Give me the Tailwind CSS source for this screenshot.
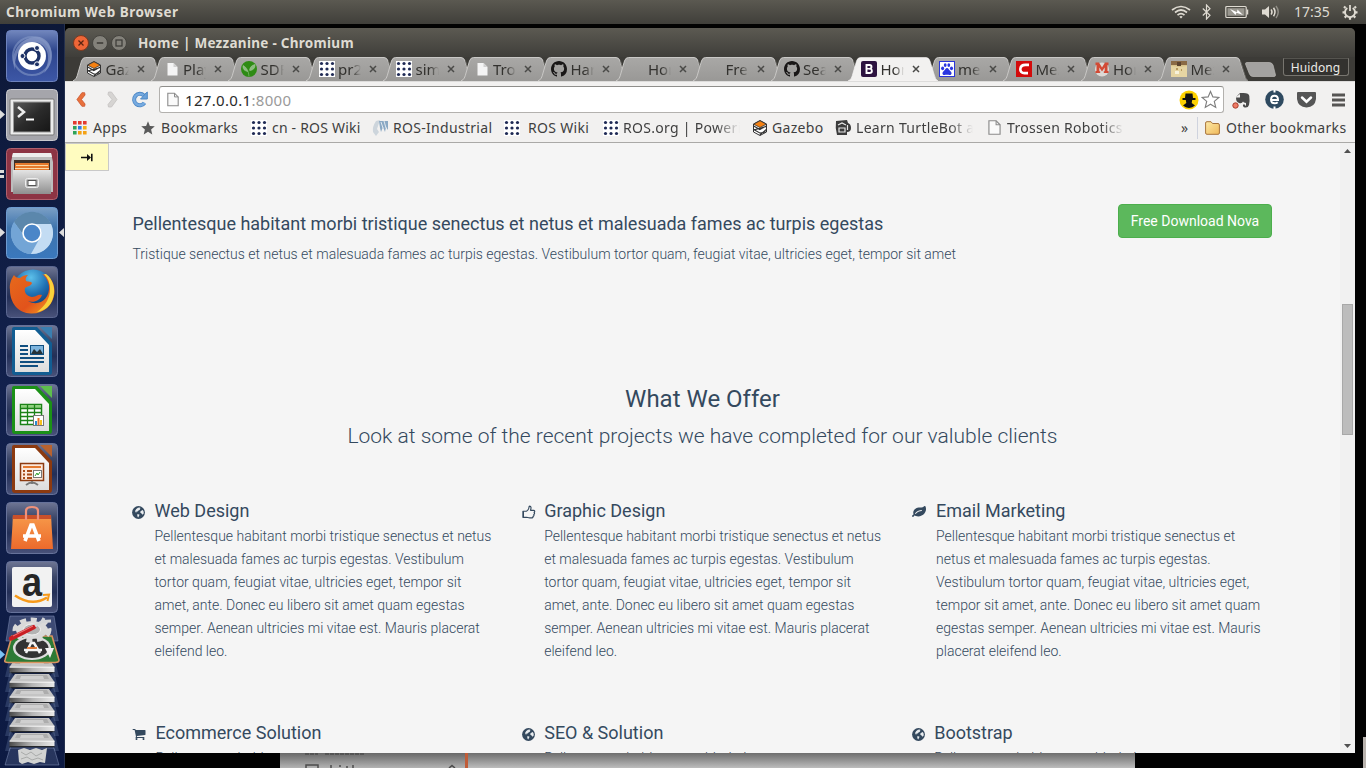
<!DOCTYPE html>
<html lang="en">
<head>
<meta charset="utf-8">
<title>Home | Mezzanine</title>
<script src="https://cdn.jsdelivr.net/npm/@tailwindcss/browser@4"></script>
</head>
<body class="h-[768px] w-[1366px] overflow-hidden bg-[#020202]">

<svg width="0" height="0" class="absolute">
  <defs>
    <linearGradient id="tabg" x1="0" y1="0" x2="0" y2="1"><stop offset="0" stop-color="#a9a8a6"/><stop offset="1" stop-color="#999896"/></linearGradient>
    <linearGradient id="org" x1="0" y1="0" x2="0" y2="1"><stop offset="0" stop-color="#f79a4a"/><stop offset="1" stop-color="#ec6a2c"/></linearGradient>
    <linearGradient id="silver" x1="0" y1="0" x2="0" y2="1"><stop offset="0" stop-color="#e4e4e4"/><stop offset="1" stop-color="#8f8f8f"/></linearGradient>
    <linearGradient id="face" x1="0" y1="0" x2="1" y2="0"><stop offset="0" stop-color="#4a4a4a"/><stop offset=".5" stop-color="#b5b5b5"/><stop offset="1" stop-color="#e8e8e8"/></linearGradient>
    <linearGradient id="tile" x1="0" y1="0" x2="0" y2="1"><stop offset="0" stop-color="#6f7694"/><stop offset=".3" stop-color="#3c4769"/><stop offset=".6" stop-color="#232f57"/><stop offset="1" stop-color="#49527a"/></linearGradient>
    <linearGradient id="blue" x1="0" y1="0" x2="0" y2="1"><stop offset="0" stop-color="#7287bd"/><stop offset=".4" stop-color="#2d458c"/><stop offset="1" stop-color="#3d57a6"/></linearGradient>
    <linearGradient id="sky" x1="0" y1="0" x2="0" y2="1"><stop offset="0" stop-color="#7ba0c6"/><stop offset=".4" stop-color="#3f74ad"/><stop offset="1" stop-color="#3a78bd"/></linearGradient>
    <linearGradient id="paper" x1="0" y1="0" x2="0" y2="1"><stop offset="0" stop-color="#ffffff"/><stop offset="1" stop-color="#dddddd"/></linearGradient>
    <linearGradient id="screen" x1="0" y1="0" x2="1" y2="1"><stop offset="0" stop-color="#5a5a5a"/><stop offset=".5" stop-color="#2b2b2b"/><stop offset="1" stop-color="#161616"/></linearGradient>
    <linearGradient id="ffox" x1="0" y1="0" x2="1" y2="1"><stop offset="0" stop-color="#e66a1c"/><stop offset=".6" stop-color="#e2531b"/><stop offset="1" stop-color="#f7a823"/></linearGradient>
    <radialGradient id="earth" cx=".45" cy=".2" r=".8"><stop offset="0" stop-color="#5cc0ea"/><stop offset=".5" stop-color="#1f6fb2"/><stop offset="1" stop-color="#0b2f66"/></radialGradient>
    <linearGradient id="fold" x1="0" y1="0" x2="1" y2="1"><stop offset="0" stop-color="#fdeaa8"/><stop offset="1" stop-color="#f0b95a"/></linearGradient>
  </defs>
  <symbol id="tab" viewBox="0 0 90 24"><path d="M0 24C3 23 4 20 5 16L8.500 4Q9.500 .5 12.500 .5H78Q81 .5 82 4L86 17Q87.500 23 90 24Z" fill="url(#tabg)"/><path d="M0 23.800C3 23 4 20 5 16L8.500 4Q9.500 .5 12.500 .5H78Q81 .5 82 4L86 17Q87.500 23 90 23.800" fill="none" stroke="#c9c8c6" stroke-width="1"/><path d="M82.500 4L86.500 17Q88 23 90 23.800" fill="none" stroke="#686763" stroke-width="1"/></symbol>
  <symbol id="tabon" viewBox="0 0 90 24"><path d="M0 24C3 23 4 20 5 16L8.500 4Q9.500 .5 12.500 .5H78Q81 .5 82 4L86 17Q87.500 23 90 24Z" fill="#f2f1f0" stroke="#f8f7f6" stroke-width=".6"/></symbol>
  <symbol id="x" viewBox="0 0 8 8"><path d="M1 1L7 7M7 1L1 7" stroke="#4a4a48" stroke-width="1.500"/></symbol>
  <symbol id="gazebo" viewBox="0 0 16 16"><path d="M8 0.500L14.500 4V12L8 15.500L1.500 12V4Z" fill="#fff" stroke="#333" stroke-width="1"/><path d="M8 .8L14.300 4.200L8 7.500L1.700 4.200Z" fill="#f58113" stroke="#333" stroke-width=".8"/><path d="M1.700 6L7.800 9.500L14.300 6M1.700 10L14.300 6.500M7.800 15L14.300 9.500M1.700 9.500L7.800 13L14 12" stroke="#333" stroke-width="1.100" fill="none"/></symbol>
  <symbol id="page" viewBox="0 0 16 16"><path d="M3.500 2H9.500L13.500 6V14.500H3.500Z" fill="#f4f4f4"/><path d="M9.500 2V6H13.500Z" fill="#d0d0d0"/></symbol>
  <symbol id="pageo" viewBox="0 0 12 14"><path d="M.8 .7H7.500L11.200 4.400V13.300H.8Z" fill="#fafafa" stroke="#8b8b8b" stroke-width="1.100"/><path d="M7.500 .7V4.400H11.200" fill="none" stroke="#8b8b8b"/></symbol>
  <symbol id="sdf" viewBox="0 0 16 16"><circle cx="8" cy="8" r="8" fill="#2e8b14"/><path d="M8 15.500C7.500 10 6 6.500 2 4.500C1.500 8 3.500 10 7 10.500M8.500 9C9 6 11 4 14 3.500C14.500 7 12 9.500 8.500 9.500" fill="#8dba80" stroke="#a9cf9e" stroke-width=".5"/></symbol>
  <symbol id="dots" viewBox="0 0 16 16"><rect width="16" height="16" fill="#fff"/><g fill="#1f2a55"><circle cx="2.500" cy="2.500" r="1.600"/><circle cx="8" cy="2.500" r="1.600"/><circle cx="13.500" cy="2.500" r="1.600"/><circle cx="2.500" cy="8" r="1.600"/><circle cx="8" cy="8" r="1.600"/><circle cx="13.500" cy="8" r="1.600"/><circle cx="2.500" cy="13.500" r="1.600"/><circle cx="8" cy="13.500" r="1.600"/><circle cx="13.500" cy="13.500" r="1.600"/></g></symbol>
  <symbol id="gh" viewBox="0 0 16 16"><path fill="#191717" d="M8 0C3.580 0 0 3.580 0 8c0 3.540 2.290 6.530 5.470 7.590.4.07.55-.17.55-.38 0-.19-.01-.82-.01-1.490-2.010.37-2.530-.49-2.690-.94-.09-.23-.48-.94-.82-1.130-.28-.15-.68-.52-.01-.53.63-.01 1.080.58 1.230.82.72 1.210 1.870.87 2.330.66.07-.52.28-.87.51-1.070-1.780-.2-3.640-.89-3.640-3.950 0-.87.31-1.590.82-2.150-.08-.2-.36-1.020.08-2.120 0 0 .67-.21 2.200.82.64-.18 1.320-.27 2-.27.68 0 1.360.09 2 .27 1.530-1.040 2.200-.82 2.200-.82.44 1.100.16 1.920.08 2.120.51.56.82 1.270.82 2.150 0 3.070-1.870 3.750-3.650 3.950.29.25.54.73.54 1.480 0 1.070-.01 1.930-.01 2.200 0 .21.15.46.55.38A8.013 8.013 0 0 0 16 8c0-4.420-3.580-8-8-8z"/></symbol>
  <symbol id="boot" viewBox="0 0 16 16"><rect width="16" height="16" rx="2" fill="#2d1340"/><path d="M5.500 4H8.500Q10.500 4 10.500 5.900Q10.500 7.200 9.300 7.700Q10.900 8.200 10.900 9.900Q10.900 12 8.500 12H5.500Z" fill="none" stroke="#fff" stroke-width="1.900"/><path d="M5.500 7.800H9" stroke="#fff" stroke-width="1.600"/></symbol>
  <symbol id="paw" viewBox="0 0 16 16"><rect x=".5" y=".5" width="15" height="15" fill="#fff" stroke="#2a36d8"/><g fill="#2a36e0"><ellipse cx="3.600" cy="7.300" rx="1.500" ry="1.900"/><ellipse cx="6.200" cy="4.100" rx="1.400" ry="1.900"/><ellipse cx="9.800" cy="4.100" rx="1.400" ry="1.900"/><ellipse cx="12.500" cy="7.300" rx="1.500" ry="1.900"/><path d="M8 7C9.500 7 10 9 11.500 10.200C13.500 12 12.500 14.200 10.500 14C9 13.700 7 13.700 5.500 14C3.500 14.200 2.700 12 4.500 10.200C6 9 6.500 7 8 7"/></g></symbol>
  <symbol id="cc" viewBox="0 0 16 16"><rect width="16" height="16" fill="#d30b0b"/><path d="M13 3.900H9.500C3 3.900 2.500 12.100 8.500 12.100H12" fill="none" stroke="#fff" stroke-width="2.600"/></symbol>
  <symbol id="mm" viewBox="0 0 16 16"><circle cx="8" cy="8.500" r="7" fill="#dcd9d5"/><path d="M1.500 1.500H5L8 6.500L11 1.500H14.500V4H13.500V10H14.500V12H9.800V10.300H10.700V6.500L8 10.500L5.300 6.500V10.300H6.200V12H1.500V10H2.500V4H1.500Z" fill="#d24a35"/></symbol>
  <symbol id="photo" viewBox="0 0 16 16"><rect width="16" height="16" fill="#d9c48c"/><rect width="16" height="4" fill="#8a6a45"/><rect x="6" y="1" width="4" height="4" fill="#5c4430"/><path d="M0 5L9 6L16 5V16H0Z" fill="#e6d5a3"/><path d="M4 10H8V13H4Z" fill="#f7f2dc"/><path d="M5 7H7V9H5ZM10 8H11V10H10Z" fill="#b79a5f"/></symbol>
  <symbol id="none" viewBox="0 0 16 16"></symbol>
  <symbol id="globe" viewBox="0 0 14 14"><circle cx="7" cy="7" r="6.900" fill="#34495e"/><path d="M6.400 1.800L8 1.500L9.300 2.200L8.200 3.200L8.800 4L7 4.900L6.100 6L4.900 5.800L4.700 7L3.700 6.600L3.400 5L4.600 3.200ZM10 5L11.600 4.200L12.600 6.200V8L11.300 9.500L10.300 8L9 7.400L9 5.900ZM6 8.600L8.200 9.500L7.500 10.800L6.700 12.300L6 11.600L5.600 9.800Z" fill="#e9ecef"/></symbol>
  <symbol id="thumb" viewBox="0 0 14 14"><path d="M4.500 6.200C6 5.400 7 3.500 7.200 1.200C9.300 .8 9.300 3 8.500 5.300H11.500C13 5.300 13 7 12.100 7.300C12.900 8 12.500 9.200 11.800 9.400C12.200 10.300 11.700 11.200 11 11.300C11.200 12.500 10.500 12.900 9.500 12.900H7.700C6.500 12.900 5.500 12.300 4.500 12.200M4.500 6.200H.9V12.300H4.500" fill="none" stroke="#34495e" stroke-width="1.150" stroke-linejoin="round"/><path d="M1 6.300H2V12H1Z" fill="#34495e"/></symbol>
  <symbol id="leaf" viewBox="0 0 1792 1792"><path fill="#34495e" d="M1280 704q0-26-19-45t-45-19q-172 0-318 49.500t-259.500 134-235.500 219.500q-19 21-19 45 0 26 19 45t45 19q24 0 45-19 27-24 74-71t67-66q137-124 268.500-176t313.500-52q26 0 45-19t19-45zm512-198q0 95-20 193-46 224-184.500 383t-357.500 268q-214 108-438 108-148 0-286-47-15-5-88-42t-96-37q-16 0-39.500 32t-45 70-52.500 70-60 32q-43 0-63.500-17.500t-45.500-59.500q-2-4-6-11t-5.500-10-3-9.500-1.500-13.500q0-35 31-73.500t68-65.500 68-56 31-48q0-4-14-38t-16-44q-9-51-9-104 0-115 43.500-220t119-184.500 170.500-139 204-95.500q55-18 145-25.500t179.500-9 178.500-6 163.500-24 113.500-56.500l29.500-29.500 29.500-28 27-20 36.500-16 43.500-4.500q39 0 70.500 46t47.500 112 24 124 8 96z"/></symbol>
  <symbol id="cart" viewBox="0 0 1792 1792"><path fill="#34495e" d="M704 1536q0 52-38 90t-90 38-90-38-38-90 38-90 90-38 90 38 38 90zm896 0q0 52-38 90t-90 38-90-38-38-90 38-90 90-38 90 38 38 90zm128-1088v512q0 24-16.500 42.500t-40.500 21.500l-1044 122q13 60 13 70 0 16-24 64h920q26 0 45 19t19 45-19 45-45 19h-1024q-26 0-45-19t-19-45q0-11 8-31.500t16-36 21.500-40 15.500-29.500l-177-823h-204q-26 0-45-19t-19-45 19-45 45-19h256q16 0 28.500 6.500t19.500 15.500 13 24.500 8 26 5.500 29.500 4.500 26h1201q26 0 45 19t19 45z"/></symbol>
  <symbol id="disk" viewBox="0 0 56 24"><path d="M6 1L1 22H6L10 6ZM50 1L55 22H50L46 6Z" fill="#8fa3cf" fill-opacity=".22"/><path d="M11 4H45L50.500 12H5.500Z" fill="#c4c4c4"/><path d="M13 5H43L45 9H11Z" fill="#adadad"/><path d="M17 6H39L40 9H16Z" fill="#cfcfcf"/><path d="M5.500 12H50.500V17H5.500Z" fill="url(#face)"/><path d="M5.500 17.700H50.500" stroke="#26282c" stroke-width="1.300"/><path d="M5.500 12.200H50.500" stroke="#f8f8f8"/></symbol>
</svg>

<div class="flex h-[768px] w-[1366px] flex-col overflow-hidden">
  <!-- Desktop panel -->
  <header class="flex h-6 shrink-0 items-center bg-linear-to-b from-[#5b5951] to-[#403f3a] pr-[8px] pl-1.5 font-['Noto_Sans',sans-serif] text-[#dfdbd2]">
    <div class="text-[13.500px] font-bold tracking-[.5px] whitespace-nowrap">Chromium Web Browser</div>
    <div class="ml-auto flex items-center">
      <svg class="mr-[11px] h-4 w-[20px]" viewBox="0 0 20 16" fill="none" stroke="#dfdbd2" stroke-width="1.700"><path d="M1 6Q10-1 19 6" /><path d="M4 8.500Q10 3.500 16 8.500"/><path d="M6.500 11.200Q10 8 13.500 11.200"/><path d="M8.300 12.800L10 14.500L11.700 12.800Q10 11.300 8.300 12.800Z" fill="#dfdbd2" stroke="none"/></svg>
      <svg class="mr-[14px] h-4 w-[9px]" viewBox="0 0 9 16" fill="none" stroke="#dfdbd2" stroke-width="1.200"><path d="M.8 4.500L8 11.300L4.500 15V1L8 4.700L.8 11.500"/></svg>
      <svg class="mr-[12px] h-4 w-[24px]" viewBox="0 0 24 16"><rect x=".8" y="2.500" width="20.400" height="11" rx="1" fill="none" stroke="#dfdbd2" stroke-width="1.200"/><rect x="2.500" y="4.200" width="17" height="7.600" fill="#99978f"/><path d="M22.500 5.500V10.500" stroke="#dfdbd2" stroke-width="1.500"/><path d="M5 5L12 8.200L12.500 5.500L18 11L11.500 8.800L10.500 11Z" fill="#fff"/></svg>
      <svg class="mr-[13px] h-4 w-[20px]" viewBox="0 0 20 16"><path d="M1 5.500H4L8 2V14L4 10.500H1Z" fill="#dfdbd2"/><path d="M10 5.500Q12 8 10 10.500M12.500 3.800Q15.500 8 12.500 12.200" fill="none" stroke="#dfdbd2" stroke-width="1.500"/><path d="M15 2Q19.500 8 15 14" fill="none" stroke="#908e86" stroke-width="1.400"/></svg>
      <div class="w-[37px] text-[14px] leading-6 whitespace-nowrap">17:35</div>
      <svg class="ml-[11px] h-4 w-4" viewBox="0 0 16 16" fill="none" stroke="#dfdbd2"><path d="M5.300 4A5 5 0 1 0 10.700 4" stroke-width="1.900"/><path d="M8 1V7" stroke-width="1.800"/><path d="M3.500 4L2 2.500M12.500 4L14 2.500M3 8.300H.5M13 8.300H15.500M4.300 12L2.700 13.600M11.700 12L13.300 13.600M8 13.300V15.700" stroke-width="2.200"/></svg>
    </div>
  </header>

  <div class="flex h-[744px]">
    <!-- Launcher -->
    <nav class="relative flex w-[65px] shrink-0 flex-col items-center gap-[7px] border-r border-[#24304e] bg-linear-to-b from-[#0d1838] via-[#12214d] to-[#0d1a42] pt-1.5">
      <svg class="h-[52px] w-[52px] shrink-0" viewBox="0 0 52 52"><rect x=".5" y=".5" width="51" height="51" rx="4" fill="url(#blue)" stroke="#6d82bd"/><path d="M9 40C2 20 18 5 34 7C50 12 48 35 38 43C48 24 38 12 28 12C16 12 8 24 9 40Z" fill="#a5b4d9" fill-opacity=".5"/><circle cx="26" cy="26" r="19" fill="none" stroke="#8497c6" stroke-opacity=".6" stroke-width="2"/><circle cx="26" cy="26" r="14" fill="#fff"/><circle cx="26" cy="26" r="7" fill="none" stroke="#1e3266" stroke-width="3.400"/><g fill="#1e3266" stroke="#fff"><circle cx="16.500" cy="26" r="2.500"/><circle cx="31" cy="18" r="2.500"/><circle cx="31" cy="34.300" r="2.500"/></g></svg>
      <svg class="h-[52px] w-[52px] shrink-0" viewBox="0 0 52 52"><rect x=".5" y=".5" width="51" height="51" rx="4" fill="#a5a5ab" stroke="#c9c9ce"/><rect x="4" y="10" width="44" height="36" rx="1" fill="#ececec" stroke="#777"/><rect x="7.500" y="13" width="37" height="30" fill="url(#screen)" stroke="#999"/><path d="M12 18L18 23L12 28" fill="none" stroke="#eee" stroke-width="2.500"/><path d="M20 30.500H28" stroke="#fff" stroke-width="2"/></svg>
      <svg class="h-[52px] w-[52px] shrink-0" viewBox="0 0 52 52"><rect x=".5" y=".5" width="51" height="51" rx="4" fill="#8d3444" stroke="#b0606d"/><path d="M7 5H45L47 14V44H5V14Z" fill="#bdbdbd"/><path d="M7 5H45L46 9H6Z" fill="#eee"/><rect x="8" y="12" width="36" height="12" fill="#403028"/><path d="M9 15H43V24H9Z" fill="#e6792c"/><path d="M10 17.500H42M9 20.500H43" stroke="#fbd9a8" stroke-width="1.200"/><path d="M7 22H45V46H7Z" fill="url(#silver)"/><rect x="19.500" y="30.500" width="13" height="9" rx="2" fill="#bbb" stroke="#eee"/><rect x="22" y="32.500" width="8" height="5" fill="#fff" stroke="#555"/></svg>
      <svg class="h-[52px] w-[52px] shrink-0" viewBox="0 0 52 52"><rect x=".5" y=".5" width="51" height="51" rx="4" fill="url(#sky)" stroke="#6e9bd0"/><circle cx="26" cy="26" r="21" fill="#8db7e0"/><path d="M8 15A21 21 0 0 1 44 15L46 18H26A9 9 0 0 0 17.500 28Z" fill="#5b87ac"/><path d="M8 15A21 21 0 0 0 25 47L33.500 31A9 9 0 0 1 17.500 28Z" fill="#73a5d6"/><path d="M26 17H45A21 21 0 0 1 25 47L34 31A9 9 0 0 0 26 17Z" fill="#c3dcf3"/><circle cx="26" cy="26" r="9" fill="#4b86c8" stroke="#fff" stroke-width="1.600"/></svg>
      <svg class="h-[52px] w-[52px] shrink-0" viewBox="0 0 52 52"><rect x=".5" y=".5" width="51" height="51" rx="4" fill="url(#tile)" stroke="#5b6790"/><circle cx="27" cy="24" r="20.500" fill="url(#earth)"/><path d="M4 24C3 17 6 12 8 9C9 11 11 12 14 12C16 10 19 9 22 9C20 11 19 13 20 15C22 16 25 15 26 17C25 20 22 20 19 22C18 26 20 30 26 31C31 31 31 28 36 29C34 35 27 37 22 35C32 41 44 34 43 20C42 14 39 10 36 8C45 10 49 18 48.500 27C47 40 37 48 25 47.500C12 47 4 37 4 24Z" fill="url(#ffox)"/><path d="M40 8C47 13 50 23 47 32C45 40 38 45 31 46C39 40 44 33 44 23C44 17 42 12 38 8Z" fill="#f8d23b"/></svg>
      <svg class="h-[52px] w-[52px] shrink-0" viewBox="0 0 52 52"><rect x=".5" y=".5" width="51" height="51" rx="4" fill="url(#tile)" stroke="#66729a"/><path d="M6 4Q6 2 8 2H31L46 18V47Q46 50 43 50H9Q6 50 6 47Z" fill="#125d92"/><path d="M34 2H46V14Z" fill="#3a7eb0"/><path d="M9 5H29L43 20V47H9Z" fill="url(#paper)"/><path d="M14 21H22M14 25H22M14 29H22M14 33H38M14 37H38M14 41H32" stroke="#104f80" stroke-width="2"/><rect x="24.500" y="20.500" width="13" height="9" fill="#7db4dd" stroke="#104f80"/><path d="M25 29L28 24L31 27L34 24L37 29Z" fill="#263238"/></svg>
      <svg class="h-[52px] w-[52px] shrink-0" viewBox="0 0 52 52"><rect x=".5" y=".5" width="51" height="51" rx="4" fill="url(#tile)" stroke="#66729a"/><path d="M6 4Q6 2 8 2H31L46 18V47Q46 50 43 50H9Q6 50 6 47Z" fill="#1b9117"/><path d="M34 2H46V14Z" fill="#5dbf4d"/><path d="M9 5H29L43 20V47H9Z" fill="url(#paper)"/><rect x="14.500" y="20.500" width="21" height="20" fill="#fff" stroke="#1b8217" stroke-width="1.500"/><path d="M15 21H35V25H15Z" fill="#8fd07f"/><path d="M14 24.500H36M14 28.500H36M14 32.500H36M14 36.500H36M21.500 20V41M28.500 20V41" stroke="#1b8217" stroke-width="1.300"/><rect x="27.500" y="31.500" width="10" height="10" fill="#fff" stroke="#777"/><path d="M29 37H31V41H29Z" fill="#2a8bd0"/><path d="M31.500 34H33.500V41H31.500Z" fill="#e87427"/><path d="M34 36H36V41H34Z" fill="#f6c21c"/></svg>
      <svg class="h-[52px] w-[52px] shrink-0" viewBox="0 0 52 52"><rect x=".5" y=".5" width="51" height="51" rx="4" fill="url(#tile)" stroke="#66729a"/><path d="M6 4Q6 2 8 2H31L46 18V47Q46 50 43 50H9Q6 50 6 47Z" fill="#8c3a10"/><path d="M34 2H46V14Z" fill="#b8622f"/><path d="M9 5H29L43 20V47H9Z" fill="url(#paper)"/><rect x="14.500" y="20.500" width="23" height="17" fill="#fce9dc" stroke="#8c3a10" stroke-width="1.500"/><path d="M17 24H35" stroke="#e06c1e" stroke-width="1.800"/><path d="M17 28H19M21 28H26M17 31.500H19M21 31.500H26M17 35H19M21 35H26" stroke="#a84c19" stroke-width="1.800"/><rect x="27.500" y="27.500" width="8" height="7" fill="#fff" stroke="#777"/><path d="M29 33L31 30L32 32L34 29" fill="none" stroke="#2c9d2c"/><path d="M26 38V41M20 42Q26 37 32 42" fill="none" stroke="#777" stroke-width="1.800"/></svg>
      <svg class="h-[52px] w-[52px] shrink-0" viewBox="0 0 52 52"><rect x=".5" y=".5" width="51" height="51" rx="4" fill="url(#tile)" stroke="#66729a"/><path d="M7 13H45L47 47H5Z" fill="url(#org)"/><path d="M7 13H45V17H6.500Z" fill="#c9502a"/><path d="M20 18V9Q20 5 26 5Q32 5 32 9V18" fill="none" stroke="#f0917a" stroke-width="2.200"/><path d="M19 39L25 23H27L33 39M17 34H35" fill="none" stroke="#fff" stroke-width="3.600"/></svg>
      <svg class="h-[52px] w-[52px] shrink-0" viewBox="0 0 52 52"><rect x=".5" y=".5" width="51" height="51" rx="4" fill="url(#tile)" stroke="#66729a"/><rect x="6" y="6" width="40" height="40" rx="2" fill="#f2f2f2"/><g transform="translate(26 34.500) scale(.88 1)"><text text-anchor="middle" font-family="Liberation Sans, sans-serif" font-weight="700" font-size="41" fill="#262626">a</text></g><path d="M9 34.500Q26 46 41 36.500" fill="none" stroke="#f79a1a" stroke-width="2.600"/><path d="M37 34L43 33.500L41.500 40" fill="none" stroke="#f79a1a" stroke-width="2"/></svg>

      <!-- Folded launcher entries -->
      <div class="absolute top-[591px] left-1 flex w-14 flex-col">
        <svg class="relative z-10 h-[49px] w-14" viewBox="0 0 56 49"><path d="M6 1H50L54 26H2Z" fill="#5b6992" fill-opacity=".6" stroke="#8492b8" stroke-opacity=".5"/><path d="M8 21H48L55 45Q55 47.500 51 47.500H4Q0 47.500 1 45Z" fill="#2d7a35" stroke="#d9935f" stroke-width="1.600"/><ellipse cx="28" cy="33" rx="19" ry="12" fill="#dedede"/><ellipse cx="28" cy="33" rx="16.500" ry="10" fill="#333"/><path d="M41 33H50L46 43Z" fill="#f0f0f0"/><path d="M22 38L27 28H30L36 38M20 35H38" fill="none" stroke="#f4f4f4" stroke-width="2.500"/><path d="M23 33H33" stroke="#ee7b31" stroke-width="1.800"/><ellipse cx="28" cy="15" rx="17" ry="10" fill="none" stroke="#dadada" stroke-width="5" stroke-dasharray="6 4.500"/><ellipse cx="28" cy="15" rx="16" ry="9" fill="#dadada"/><ellipse cx="28" cy="14.500" rx="8.500" ry="5.500" fill="#b4b4b4" stroke="#f3f3f3"/><path d="M7 23.500L30 12" stroke="#c91f24" stroke-width="4.500" stroke-linecap="round"/><path d="M9 21L29 11" stroke="#ee8083" stroke-width="1"/><path d="M31 11L38 6.500L40 3M38 6.500L47 6" fill="none" stroke="#d3d5d8" stroke-width="3"/></svg>
        <div class="-mt-[8.700px] flex flex-col">
          <svg class="h-6 w-14"><use href="#disk"/></svg>
          <svg class="-mt-[9.300px] h-6 w-14"><use href="#disk"/></svg>
          <svg class="-mt-[9.300px] h-6 w-14"><use href="#disk"/></svg>
          <svg class="-mt-[9.300px] h-6 w-14"><use href="#disk"/></svg>
          <svg class="-mt-[9.300px] h-6 w-14"><use href="#disk"/></svg>
          <svg class="-mt-[9.300px] h-6 w-14"><use href="#disk"/></svg>
          <svg class="-mt-[6px] h-5 w-14" viewBox="0 0 56 20"><path d="M6 1H50L55 18H1Z" fill="#8fa3cf" fill-opacity=".2" stroke="#9fb0d6" stroke-opacity=".4"/><path d="M14 3L20 1L26 3L32 1L38 3L43 1L41 16L36 15L30 17L24 15L18 17L15 15Z" fill="#d2d3d2"/><path d="M17 5L22 8L27 5L32 9L38 6M17 12L23 10L28 13L34 11L39 13" fill="none" stroke="#a9abaa"/></svg>
        </div>
      </div>

      <!-- Running and focus arrows -->
      <svg class="absolute top-0 left-0 h-[744px] w-[65px]" viewBox="0 0 65 744"><g fill="#dcdcdc"><path d="M0 86L5 90.500L0 95ZM0 204L5 208.500L0 213ZM64 204L59 208.500L64 213Z"/><path d="M0 146H4V149H0ZM0 151H4V154H0Z"/></g><path d="M0 626L5 630.500L0 635Z" fill="#7cc4f4"/></svg>
    </nav>

    <!-- Workspace -->
    <div class="relative h-[744px] w-[1301px]">
      <!-- Window behind -->
      <div class="absolute top-[729px] left-[215px] flex h-[15px] w-[855px] overflow-hidden bg-linear-to-b from-[#6e6e6e] to-[#bdbdbd]">
        <div class="h-[15px] w-[185px] bg-black/5 pl-[25px]">
          <svg class="h-[15px] w-[160px]" viewBox="0 0 160 15" fill="none" stroke="#4c4c4c" stroke-width="1.500"><path d="M0 1H13M20 1H60" stroke-dasharray="4 1"/><rect x="1" y="12" width="12" height="8"/><path d="M26 15V12M34 13H36M42 15V13M48 15V12M144 15L147 12.500L150 15"/></svg>
        </div>
        <div class="h-[15px] w-[3px] bg-[#c05c38]"></div>
      </div>
      <div class="absolute top-[713px] left-[1298px] h-[31px] w-[3px] bg-[#b9b3ae]"></div>

      <!-- Browser window -->
      <section class="absolute top-1 left-0 flex h-[725px] w-[1290px] flex-col overflow-hidden rounded-t-[5px] bg-[#3c3b37] font-['Noto_Sans',sans-serif]">
        <div class="flex h-[29px] shrink-0 items-center bg-linear-to-b from-[#5c5a52] to-[#3f3e3a] pl-[8px]">
          <div class="flex gap-[3px]">
            <svg class="h-4 w-4" viewBox="0 0 16 16"><circle cx="8" cy="8" r="7.500" fill="#ee6637" stroke="#7b3a22"/><path d="M5.500 5.500L10.500 10.500M10.500 5.500L5.500 10.500" stroke="#5b2412" stroke-width="1.300"/></svg>
            <svg class="h-4 w-4" viewBox="0 0 16 16"><circle cx="8" cy="8" r="7.500" fill="#83817a" stroke="#45443f"/><path d="M4.800 8H11.200" stroke="#3a3935" stroke-width="1.300"/></svg>
            <svg class="h-4 w-4" viewBox="0 0 16 16"><circle cx="8" cy="8" r="7.500" fill="#83817a" stroke="#45443f"/><rect x="5" y="5" width="6" height="6" fill="none" stroke="#3a3935" stroke-width="1.200"/></svg>
          </div>
          <div class="mt-px ml-[11px] text-[13.500px] font-bold tracking-[.28px] whitespace-nowrap text-[#dfdbd2]">Home | Mezzanine - Chromium</div>
        </div>
        <div class="flex h-6 shrink-0 items-start pl-[8px]">
          <div id="tabs" class="flex h-6 w-[1172.500px] shrink-0"></div>
          <svg class="mt-[5px] -ml-px h-[15px] w-[31px] shrink-0" viewBox="0 0 31 15"><path d="M2 .5H24Q27 .5 28 3L30.500 13Q30.500 14.500 29 14.500H8Q5.500 14.500 4.500 12L.5 2Q.3 .5 2 .5Z" fill="#a3a2a0" stroke="#bab9b6" stroke-width=".7"/></svg>
          <div class="mt-px ml-[7px] h-[18px] w-[66px] rounded-b-[3px] border border-t-[#55544f] border-[#77756f] bg-[#33322f] text-center text-[12px] leading-[17px] tracking-[.1px] text-[#eceae6]">Huidong</div>
        </div>

        <!-- Toolbar -->
        <div class="flex h-[34px] shrink-0 items-center border-t border-[#dddcdb] bg-[#f2f1f0] pt-[2px]">
          <svg class="ml-[11px] h-[17px] w-[10px]" viewBox="0 0 11 17"><path d="M9.500 1L6.500 1L1 8.500L6.500 16H9.500L10 13.500L6 8.500L10 3.500Z" fill="#e8713c" stroke="#c8502a" stroke-width=".8"/></svg>
          <svg class="ml-[21px] h-[17px] w-[11px]" viewBox="0 0 11 17"><path d="M1.500 1L4.500 1L10 8.500L4.500 16H1.500L1 13.500L5 8.500L1 3.500Z" fill="#d6d4d2" stroke="#c4c2c0" stroke-width=".8"/></svg>
          <svg class="ml-[13px] h-[17px] w-[18px]" viewBox="0 0 18 17"><path d="M13.500 11.800A5.700 5.700 0 1 1 12.800 4.500" fill="none" stroke="#4f88c4" stroke-width="4"/><path d="M13.500 11.800A5.700 5.700 0 1 1 12.800 4.500" fill="none" stroke="#76aae0" stroke-width="2.400"/><path d="M16.300 1V8H9.500L12 5.500L14 3Z" fill="#6ba2da" stroke="#4f88c4"/></svg>
          <div class="ml-[10px] flex h-[27px] w-[1065px] items-center rounded-[3px] border border-[#b3b1ae] border-t-[#8f8e8b] bg-white pl-[7px]">
            <svg class="h-[15px] w-3"><use href="#pageo"/></svg>
            <div class="ml-[6px] text-[15px] leading-6 tracking-[.32px] whitespace-nowrap text-[#2b2b2b]">127.0.0.1<span class="text-[#9a9a9a]">:8000</span></div>
            <svg class="mr-[2px] ml-auto h-5 w-5" viewBox="0 0 20 20"><circle cx="10" cy="10" r="9.500" fill="#fdd100"/><path d="M6.500 3.500H13.500L14 8H16.500V10H13.200L12.700 13L16 15.500A8.500 8.500 0 0 1 4 15.500L7.300 13L6.800 10H3.500V8H6Z" fill="#111"/></svg>
            <svg class="mr-[3px] h-[19px] w-[19px]" viewBox="0 0 20 20"><path d="M10 1.500L12.500 7.300L18.800 7.900L14 12L15.500 18.300L10 15L4.500 18.300L6 12L1.200 7.900L7.500 7.300Z" fill="#fff" stroke="#7e7e7e" stroke-width="1.200"/></svg>
          </div>
          <svg class="ml-[8px] h-[18px] w-[19px]" viewBox="0 0 19 18"><path d="M4 6L8 2H11.500Q17 2 17.300 5Q18 10 17 14Q16 17 13 16.500Q10.500 16 11 13.500H13Q12.500 15 14 14.500L14 12Q11.500 11.500 11 10.500Q10 13 7 12Q4 11 4 6.500H8V3Z" fill="#4a4a4a"/><circle cx="3.500" cy="14.500" r="2.700" fill="#ef7b66" stroke="#a8402f"/></svg>
          <svg class="ml-[14px] h-[19px] w-[19px]" viewBox="0 0 19 19"><circle cx="9.500" cy="9.500" r="9.300" fill="#2f4a60"/><path d="M6 10H13Q13 5.800 9.500 5.800Q6 5.800 6 9.800Q6 13.300 9.700 13.300Q11.500 13.300 12.700 12.200M9.500 0V2.500M9.500 16.500V19" fill="none" stroke="#fff" stroke-width="2"/></svg>
          <svg class="ml-[13px] h-[17px] w-[19px]" viewBox="0 0 19 17"><path d="M1 1H18Q19 1 19 2V8Q18 16 9.500 16.500Q1 16 0 8V2Q0 1 1 1Z" fill="#565656"/><path d="M5 6.500L9.500 10.700L14 6.500" fill="none" stroke="#fff" stroke-width="2.500" stroke-linecap="round"/></svg>
          <svg class="ml-[16px] h-[14px] w-[13px]" viewBox="0 0 13 14"><path d="M0 2H13M0 7H13M0 12H13" stroke="#565553" stroke-width="2.800"/></svg>
        </div>

        <!-- Bookmarks bar -->
        <div class="flex h-7 shrink-0 items-center border-b border-[#aaa9a7] bg-[#f2f1f0] pb-[2px] pl-[8px] text-[14px] leading-6 tracking-[.3px] whitespace-nowrap text-[#3f3f3f]">
          <div class="flex w-[68px] items-center"><svg class="mr-[6px] h-[14px] w-[14px]" viewBox="0 0 14 14"><path d="M0 0H3.600V3.600H0ZM5 0H8.600V3.600H5ZM10 0H13.600V3.600H10Z" fill="#e33a2e"/><path d="M0 5H3.600V8.600H0Z" fill="#2ea357"/><path d="M5 5H8.600V8.600H5Z" fill="#2f7de0"/><path d="M10 5H13.600V8.600H10Z" fill="#f4b113"/><path d="M0 10H3.600V13.600H0Z" fill="#2ea357"/><path d="M5 10H8.600V13.600H5ZM10 10H13.600V13.600H10Z" fill="#f4a113"/></svg>Apps</div>
          <div class="flex w-[110px] items-center"><svg class="mr-[6px] h-[14px] w-[14px]" viewBox="0 0 14 14"><path d="M7 .3L8.900 4.900L13.800 5.300L10.100 8.500L11.300 13.500L7 10.800L2.700 13.500L3.900 8.500L.2 5.300L5.100 4.900Z" fill="#5a5a5a"/></svg>Bookmarks</div>
          <div class="flex w-[121px] items-center tracking-[.2px]"><svg class="mr-[5px] h-4 w-4"><use href="#dots"/></svg>cn - ROS Wiki</div>
          <div class="flex w-[132px] items-center"><svg class="mr-[5px] h-4 w-4" viewBox="0 0 16 16"><path d="M4 1L8 0L5 9L7 12L4 16L1 12Q0 7 4 1Z" fill="#cdd5dc"/><path d="M7 1H16V10L14 7L13 12L11 7L9 12L8 8Z" fill="#8ba9c4"/><path d="M9 2L11 8M12 1L14 8" stroke="#e1e8ee"/></svg>ROS-Industrial</div>
          <div class="flex w-[99px] items-center"><svg class="mr-[8px] h-4 w-4"><use href="#dots"/></svg>ROS Wiki</div>
          <div class="flex w-[150px] items-center"><svg class="mr-[4px] h-4 w-4"><use href="#dots"/></svg><span class="w-[117px] overflow-hidden mask-r-from-80% mask-r-to-100%">ROS.org | Powering</span></div>
          <div class="flex w-[83px] items-center"><svg class="mr-[4px] -ml-px h-4 w-4"><use href="#gazebo"/></svg>Gazebo</div>
          <div class="flex w-[152px] items-center"><svg class="mr-[5px] -ml-px h-4 w-4" viewBox="0 0 16 16"><path d="M1 1L12 0L13 3Q16 4 16 8Q16 12 12 12V15H2Q0 8 1 1Z" fill="#3c3c3c"/><path d="M3 5L7 3L11 5M4 8H10V12H4ZM12.500 5V10" fill="none" stroke="#e8e8e8" stroke-width="1.200"/></svg><span class="w-[117px] overflow-hidden mask-r-from-80% mask-r-to-100%">Learn TurtleBot and</span></div>
          <div class="flex w-[190px] items-center"><svg class="mr-[6px] h-[15px] w-[13px]"><use href="#pageo"/></svg><span class="w-[117px] overflow-hidden mask-r-from-80% mask-r-to-100%">Trossen Robotics</span></div>
          <div class="w-[19px] pl-[3px]">»</div>
          <div class="mr-[7px] h-[22px] w-px bg-[#cfd3de]"></div>
          <svg class="mr-[6px] h-[14px] w-[15px] shrink-0" viewBox="0 0 15 14"><path d="M.6 2Q.6 .7 2 .7H6L7.500 2.500H13Q14.400 2.500 14.400 4V12Q14.400 13.300 13 13.300H2Q.6 13.300 .6 12Z" fill="url(#fold)" stroke="#a8743c"/></svg>
          <div>Other bookmarks</div>
        </div>

        <!-- Page -->
        <div class="flex h-[610px]">
          <main class="relative h-[610px] w-[1275px] overflow-hidden bg-[#f5f5f5] font-[Roboto,sans-serif] text-[#34495e]">
            <div class="absolute top-0 left-0 flex h-7 w-11 items-center justify-center border border-[#c9c9c9] bg-[#fffcc0]"><svg class="h-[9px] w-[12px]" viewBox="0 0 12 9"><path d="M0 4.500H8M10.800 .8V8.200" stroke="#111" stroke-width="1.600"/><path d="M6 1L10 4.500L6 8Z" fill="#111"/></svg></div>
            <div class="ml-[67px] w-[1140px]">
              <div class="flex justify-between pt-[61px]">
                <div class="pt-[8px] pl-[.5px] whitespace-nowrap">
                  <h3 class="text-[18px] leading-6 font-normal">Pellentesque habitant morbi tristique senectus et netus et malesuada fames ac turpis egestas</h3>
                  <p class="mt-[7px] text-[14px] leading-[23px] font-light">Tristique senectus et netus et malesuada fames ac turpis egestas. Vestibulum tortor quam, feugiat vitae, ultricies eget, tempor sit amet</p>
                </div>
                <div class="h-[34px] w-[154px] rounded-[4px] border border-[#4cae4c] bg-[#5cb85c] text-center text-[14px] leading-[32px] text-white">Free Download Nova</div>
              </div>
              <h2 class="mt-[118px] pl-px text-center text-[24px] leading-[30px]">What We Offer</h2>
              <p class="mt-[7px] pl-px text-center text-[21px] leading-[30px] font-light">Look at some of the recent projects we have completed for our valuble clients</p>
              <div class="mt-[49px] grid grid-cols-[390px_390px_360px] gap-y-[59px] whitespace-nowrap">
                <div class="flex"><svg class="mt-[6px] h-[13px] w-[13px] shrink-0"><use href="#globe"/></svg><div class="ml-[9.500px]"><h3 class="text-[18px] leading-[22px]">Web Design</h3><p class="pt-[3px] text-[14px] leading-[23px] font-light">Pellentesque habitant morbi tristique senectus et netus<br>et malesuada fames ac turpis egestas. Vestibulum<br>tortor quam, feugiat vitae, ultricies eget, tempor sit<br>amet, ante. Donec eu libero sit amet quam egestas<br>semper. Aenean ultricies mi vitae est. Mauris placerat<br>eleifend leo.</p></div></div>
                <div class="flex"><svg class="mt-[5px] h-[14px] w-[14px] shrink-0"><use href="#thumb"/></svg><div class="ml-[8.200px]"><h3 class="text-[18px] leading-[22px]">Graphic Design</h3><p class="pt-[3px] text-[14px] leading-[23px] font-light">Pellentesque habitant morbi tristique senectus et netus<br>et malesuada fames ac turpis egestas. Vestibulum<br>tortor quam, feugiat vitae, ultricies eget, tempor sit<br>amet, ante. Donec eu libero sit amet quam egestas<br>semper. Aenean ultricies mi vitae est. Mauris placerat<br>eleifend leo.</p></div></div>
                <div class="flex"><svg class="mt-[5px] h-[14px] w-[14px] shrink-0"><use href="#leaf"/></svg><div class="ml-[10px]"><h3 class="text-[18px] leading-[22px]">Email Marketing</h3><p class="pt-[3px] text-[14px] leading-[23px] font-light">Pellentesque habitant morbi tristique senectus et<br>netus et malesuada fames ac turpis egestas.<br>Vestibulum tortor quam, feugiat vitae, ultricies eget,<br>tempor sit amet, ante. Donec eu libero sit amet quam<br>egestas semper. Aenean ultricies mi vitae est. Mauris<br>placerat eleifend leo.</p></div></div>
                <div class="flex"><svg class="mt-[5px] h-[14px] w-[14px] shrink-0"><use href="#cart"/></svg><div class="ml-[9.500px]"><h3 class="text-[18px] leading-[22px]">Ecommerce Solution</h3><p class="pt-[3px] text-[14px] leading-[23px] font-light">Pellentesque habitant</p></div></div>
                <div class="flex"><svg class="mt-[6px] h-[13px] w-[13px] shrink-0"><use href="#globe"/></svg><div class="ml-[9.200px]"><h3 class="text-[18px] leading-[22px]">SEO &amp; Solution</h3><p class="pt-[3px] text-[14px] leading-[23px] font-light">Pellentesque habitant morbi tristique</p></div></div>
                <div class="flex"><svg class="mt-[6px] h-[13px] w-[13px] shrink-0"><use href="#globe"/></svg><div class="ml-[9.200px]"><h3 class="text-[18px] leading-[22px]">Bootstrap</h3><p class="pt-[3px] text-[14px] leading-[23px] font-light">Pellentesque habitant morbi tristique</p></div></div>
              </div>
            </div>
          </main>
          <div class="flex h-[610px] w-[15px] flex-col items-center bg-[#f1f1f1]">
            <svg class="mt-[6px] h-1 w-[7px] shrink-0" viewBox="0 0 7 4"><path d="M3.500 0L7 4H0Z" fill="#505050"/></svg>
            <div class="mt-[151px] h-[131px] w-[11px] shrink-0 border border-[#a8a8a8] bg-[#bcbcbc]"></div>
            <svg class="mt-auto mb-[5px] h-1 w-[7px] shrink-0" viewBox="0 0 7 4"><path d="M3.500 4L7 0H0Z" fill="#505050"/></svg>
          </div>
        </div>
      </section>
    </div>
  </div>
</div>

<script>
  // Each entry: favicon symbol, tab label
  const tabs = [
    ['gazebo', 'Gaze'], ['page', 'Play'], ['sdf', 'SDF'], ['dots', 'pr2_'], ['dots', 'sim'],
    ['page', 'Tro'], ['gh', 'Har'], ['none', 'Hom'], ['none', 'Fre'], ['gh', 'Sea'],
    ['boot', 'Hom'], ['paw', 'me'], ['cc', 'Mez'], ['mm', 'Hom'], ['photo', 'Mez']
  ];
  document.getElementById('tabs').innerHTML = tabs.map(([icon, label], i) => {
    const on = i === 10;
    return `<div class="relative h-6 w-[77.500px] shrink-0 ${on ? 'z-10' : ''}">
      <svg class="absolute top-0 left-0 h-6 w-[90px]"><use href="#${on ? 'tabon' : 'tab'}"/></svg>
      <div class="relative flex h-6 items-center pl-[13px]">
        <svg class="h-4 w-4 shrink-0"><use href="#${icon}"/></svg>
        <div class="ml-[3.500px] w-[23px] overflow-hidden text-[15px] leading-6 whitespace-nowrap text-[#33322f] mask-r-from-60% mask-r-to-100%">${label}</div>
        <svg class="ml-[8px] h-2 w-2 shrink-0"><use href="#x"/></svg>
      </div>
    </div>`;
  }).join('');
</script>
</body>
</html>
